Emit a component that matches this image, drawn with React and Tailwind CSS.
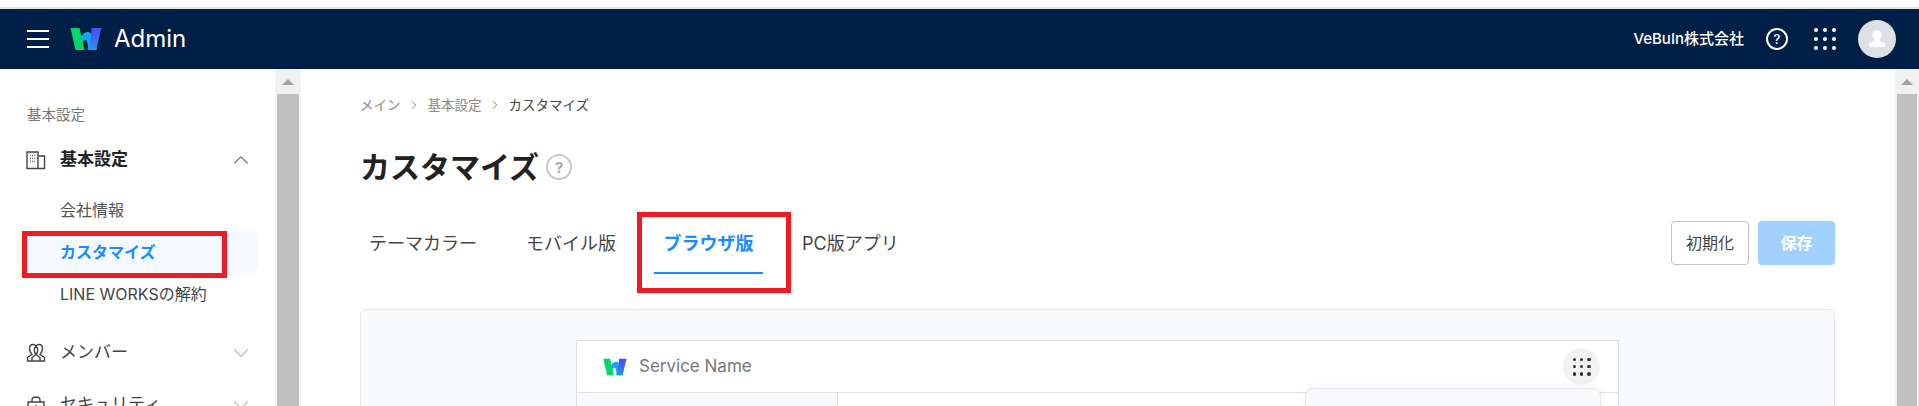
import React from 'react';
import { ChevronUp, ChevronDown, ChevronRight } from 'lucide-react';

const jp = 'font-["Inter","Noto_Sans_CJK_JP",sans-serif]';

function Logo({ className, id }) {
  return (
    <svg viewBox="0 0 32 22" className={className}>
      <defs>
        <linearGradient id={id} x1="0" y1="0" x2="0" y2="1">
          <stop offset="0" stopColor="#5346f5" />
          <stop offset="0.55" stopColor="#3a6cf8" />
          <stop offset="1" stopColor="#1a9cf5" />
        </linearGradient>
      </defs>
      <path d="M9 13 C11 6 15 4 18 4 C22 4 25 10 27 22 L18 22 C18 16 17 12 15.500 12 C13.500 12 12.500 15 12 17 Z" fill="#17a5ee" />
      <path d="M0.500 0 L9.500 0 L14.500 22 L5.500 22 Z" fill="#05d668" />
      <path d="M21.500 0 L31.500 0 L26 22 L18 22 C20.500 15 21.500 8 21.500 0 Z" fill={`url(#${id})`} />
    </svg>
  );
}

function Dots({ className, dot }) {
  const dots = [0, 1, 2, 3, 4, 5, 6, 7, 8];
  return (
    <div className={`grid grid-cols-3 ${className}`}>
      {dots.map((d) => (
        <span key={d} className={`rounded-full ${dot}`}></span>
      ))}
    </div>
  );
}

function Scrollbar() {
  return (
    <div className="flex flex-col items-center bg-[#f1f1f1] px-[2px] h-full">
      <div className="h-[25px] flex items-center justify-center shrink-0">
        <span className="w-0 h-0 border-x-[6px] border-x-transparent border-b-[6px] border-b-[#a3a3a3]"></span>
      </div>
      <div className="w-full flex-1 bg-[#c1c1c1]"></div>
    </div>
  );
}

function NavHeader({ icon, label, open, bold }) {
  return (
    <div className="flex items-center h-[40px] pl-[26px] pr-[21px]">
      <span className="w-[20px] h-[20px] shrink-0 text-[#444]">{icon}</span>
      <span className={`ml-[14px] flex-1 text-[17px] ${bold ? 'font-bold text-[#222]' : 'text-[#444]'}`}>{label}</span>
      {open ? <ChevronUp size={26} strokeWidth={1} className="text-[#777]" /> : <ChevronDown size={26} strokeWidth={1} className="text-[#bbb]" />}
    </div>
  );
}

const BuildingIcon = (
  <svg viewBox="0 0 20 20" fill="none" stroke="currentColor" strokeWidth="1.4" className="w-full h-full">
    <path d="M1 18.500 V2 H12 V18.500 H1 Z M12 6 H18.500 V18.500 H12" />
    <path d="M4 5.500 H4.800 M6.200 5.500 H7 M8.400 5.500 H9.200 M4 8.500 H4.800 M6.200 8.500 H7 M8.400 8.500 H9.200 M4 11.500 H4.800 M6.200 11.500 H7 M8.400 11.500 H9.200" />
  </svg>
);

const PeopleIcon = (
  <svg viewBox="0 0 20 20" fill="none" stroke="currentColor" strokeWidth="1.4" className="w-full h-full">
    <path d="M10 18 H1.500 V14.500 L6 11.500 C4.500 10 3.500 8 3.500 5.500 C3.500 3 5 1.500 7 1.500 C8.500 1.500 9.500 2.300 10 3 C10.500 2.300 11.500 1.500 13 1.500 C15 1.500 16.500 3 16.500 5.500 C16.500 8 15.500 10 14 11.500 L18.500 14.500 V18 H10" />
    <path d="M10 3 C7.500 5 8 9.500 10 11.500 C12 9.500 12.500 5 10 3 Z M10 11.500 L6 14.500 V18 M10 11.500 L14 14.500 V18" />
  </svg>
);

const LockIcon = (
  <svg viewBox="0 0 20 20" fill="none" stroke="currentColor" strokeWidth="1.4" className="w-full h-full">
    <path d="M2 7 H18 V18 H2 Z M6 7 V5 C6 1 14 1 14 5 V7" />
    <circle cx="10" cy="12" r="1" />
  </svg>
);

export default function App() {
  return (
    <div className={`h-[406px] w-full overflow-hidden bg-white ${jp}`}>
      <div className="h-[7px] bg-white"></div>
      <div className="h-[2px] bg-[#e2e2e2]"></div>

      {/* Top bar */}
      <header className="h-[60px] bg-[#001f47] flex items-center text-white">
        <div className="ml-[27px] w-[22px] flex flex-col gap-[6px]">
          <span className="h-[2px] bg-white"></span>
          <span className="h-[2px] bg-white"></span>
          <span className="h-[2px] bg-white"></span>
        </div>
        <Logo id="logo-top" className="ml-[21px] w-[32px] h-[22px]" />
        <span className="ml-[12px] text-[24px] leading-none">Admin</span>
        <div className="ml-auto flex items-center">
          <span className="text-[15px] font-medium">VeBuIn株式会社</span>
          <span className="ml-[22px] w-[22px] h-[22px] rounded-full border-2 border-white flex items-center justify-center text-[13px] font-medium leading-none">?</span>
          <Dots className="ml-[26px] w-[22px] h-[22px] gap-[5px]" dot="bg-white" />
          <div className="ml-[22px] mr-[23px] w-[38px] h-[38px] rounded-full bg-[#dde0e4] flex items-center justify-center">
            <svg viewBox="0 0 20 20" className="w-[20px] h-[20px]" fill="#fff">
              <path d="M10 1 C13 1 14.500 3.500 14.500 6 C14.500 8.500 13 10.500 12.500 11.500 L18 15 V18 H2 V15 L7.500 11.500 C7 10.500 5.500 8.500 5.500 6 C5.500 3.500 7 1 10 1 Z" />
            </svg>
          </div>
        </div>
      </header>

      <div className="flex h-[337px]">
        {/* Sidebar */}
        <aside className="w-[275px] shrink-0 relative pt-[34px] overflow-hidden">
          <p className="pl-[27px] text-[14.500px] leading-[24px] text-[#777]">基本設定</p>
          <div className="mt-[13px]">
            <NavHeader icon={BuildingIcon} label="基本設定" open bold />
          </div>
          <ul className="mt-[9px] text-[16px]">
            <li className="h-[42px] ml-[17px] w-[241px] pl-[43px] flex items-center text-[#555]">会社情報</li>
            <li className="h-[42px] ml-[17px] w-[241px] pl-[43px] flex items-center rounded-[6px] bg-[#f4f8ff] font-bold text-[#1a8cff]">カスタマイズ</li>
            <li className="h-[42px] ml-[17px] w-[241px] pl-[43px] flex items-center text-[#444]">LINE WORKSの解約</li>
          </ul>
          <div className="mt-[18px]">
            <NavHeader icon={PeopleIcon} label="メンバー" />
          </div>
          <div className="mt-[12px]">
            <NavHeader icon={LockIcon} label="セキュリティ" />
          </div>
          {/* annotation */}
          <div className="absolute left-[22px] top-[162px] w-[205px] h-[47px] border-[5px] border-[#ed1c24]"></div>
        </aside>
        <div className="w-[26px] shrink-0"><Scrollbar /></div>

        {/* Main */}
        <main className="flex-1 min-w-0 pl-[59px] pr-[60px] pt-[26px] overflow-hidden">
          <nav className="flex items-center text-[13.500px] leading-[20px] text-[#888]">
            <span>メイン</span>
            <ChevronRight size={14} strokeWidth={1.25} className="mx-[6.500px] text-[#555]" />
            <span>基本設定</span>
            <ChevronRight size={14} strokeWidth={1.25} className="mx-[6.500px] text-[#555]" />
            <span className="text-[#444]">カスタマイズ</span>
          </nav>
          <div className="mt-[30px] flex items-center">
            <h1 className="text-[30px] leading-[44px] font-bold text-[#222]">カスタマイズ</h1>
            <span className="ml-[7px] w-[26px] h-[26px] rounded-full border-2 border-[#c8c8c8] flex items-center justify-center text-[15px] font-bold leading-none text-[#aaa]">?</span>
          </div>

          <div className="mt-[31px] flex items-start justify-between relative">
            <div className="flex text-[18px] text-[#444] h-[66px]">
              <span className="pl-[9px] w-[166px] pt-[10px]">テーマカラー</span>
              <span className="w-[128px] pt-[10px]">モバイル版</span>
              <span className="w-[109px] h-[54px] pt-[10px] text-center font-bold text-[#1a8cff] border-b-2 border-[#1a8cff]">ブラウザ版</span>
              <span className="ml-[39px] pt-[10px]">PC版アプリ</span>
            </div>
            <div className="flex gap-[9px] pt-[1px]">
              <button className="w-[78px] h-[44px] rounded-[4px] border border-[#c4c4c4] bg-white text-[16px] text-[#444]">初期化</button>
              <button className="w-[77px] h-[44px] rounded-[4px] bg-[#a3d1ff] text-[16px] font-bold text-white">保存</button>
            </div>
            {/* annotation */}
            <div className="absolute left-[277px] top-[-8px] w-[154px] h-[81px] border-[5px] border-[#ed1c24]"></div>
          </div>

          <div className="mt-[23px] h-[200px] rounded-t-[6px] border border-[#e4e6e9] bg-[#f9fafb] pt-[30px] pl-[215px] pr-[215px]">
            <div className="h-[170px] border border-[#dde1e6] bg-white relative">
              <div className="h-[52px] flex items-center pl-[26px] pr-[18px] border-b border-[#dde1e6]">
                <Logo id="logo-preview" className="w-[24px] h-[18px]" />
                <span className="ml-[12px] text-[17px] text-[#777]">Service Name</span>
                <div className="ml-auto w-[37px] h-[37px] rounded-full bg-[#f2f2f2] flex items-center justify-center">
                  <Dots className="w-[18px] h-[18px] gap-[3.500px]" dot="bg-[#333]" />
                </div>
              </div>
              <div className="h-[120px] w-[261px] bg-[#f7f9fb] border-r border-[#dde1e6]"></div>
              {/* dropdown */}
              <div className="absolute left-[728px] top-[47px] w-[296px] h-[80px] rounded-[8px] border border-[#e6e8ec] bg-[#f8f9fb] shadow-[0_0_12px_rgba(0,0,0,0.06)]"></div>
            </div>
          </div>
        </main>
        <div className="w-[24px] shrink-0"><Scrollbar /></div>
      </div>
    </div>
  );
}
